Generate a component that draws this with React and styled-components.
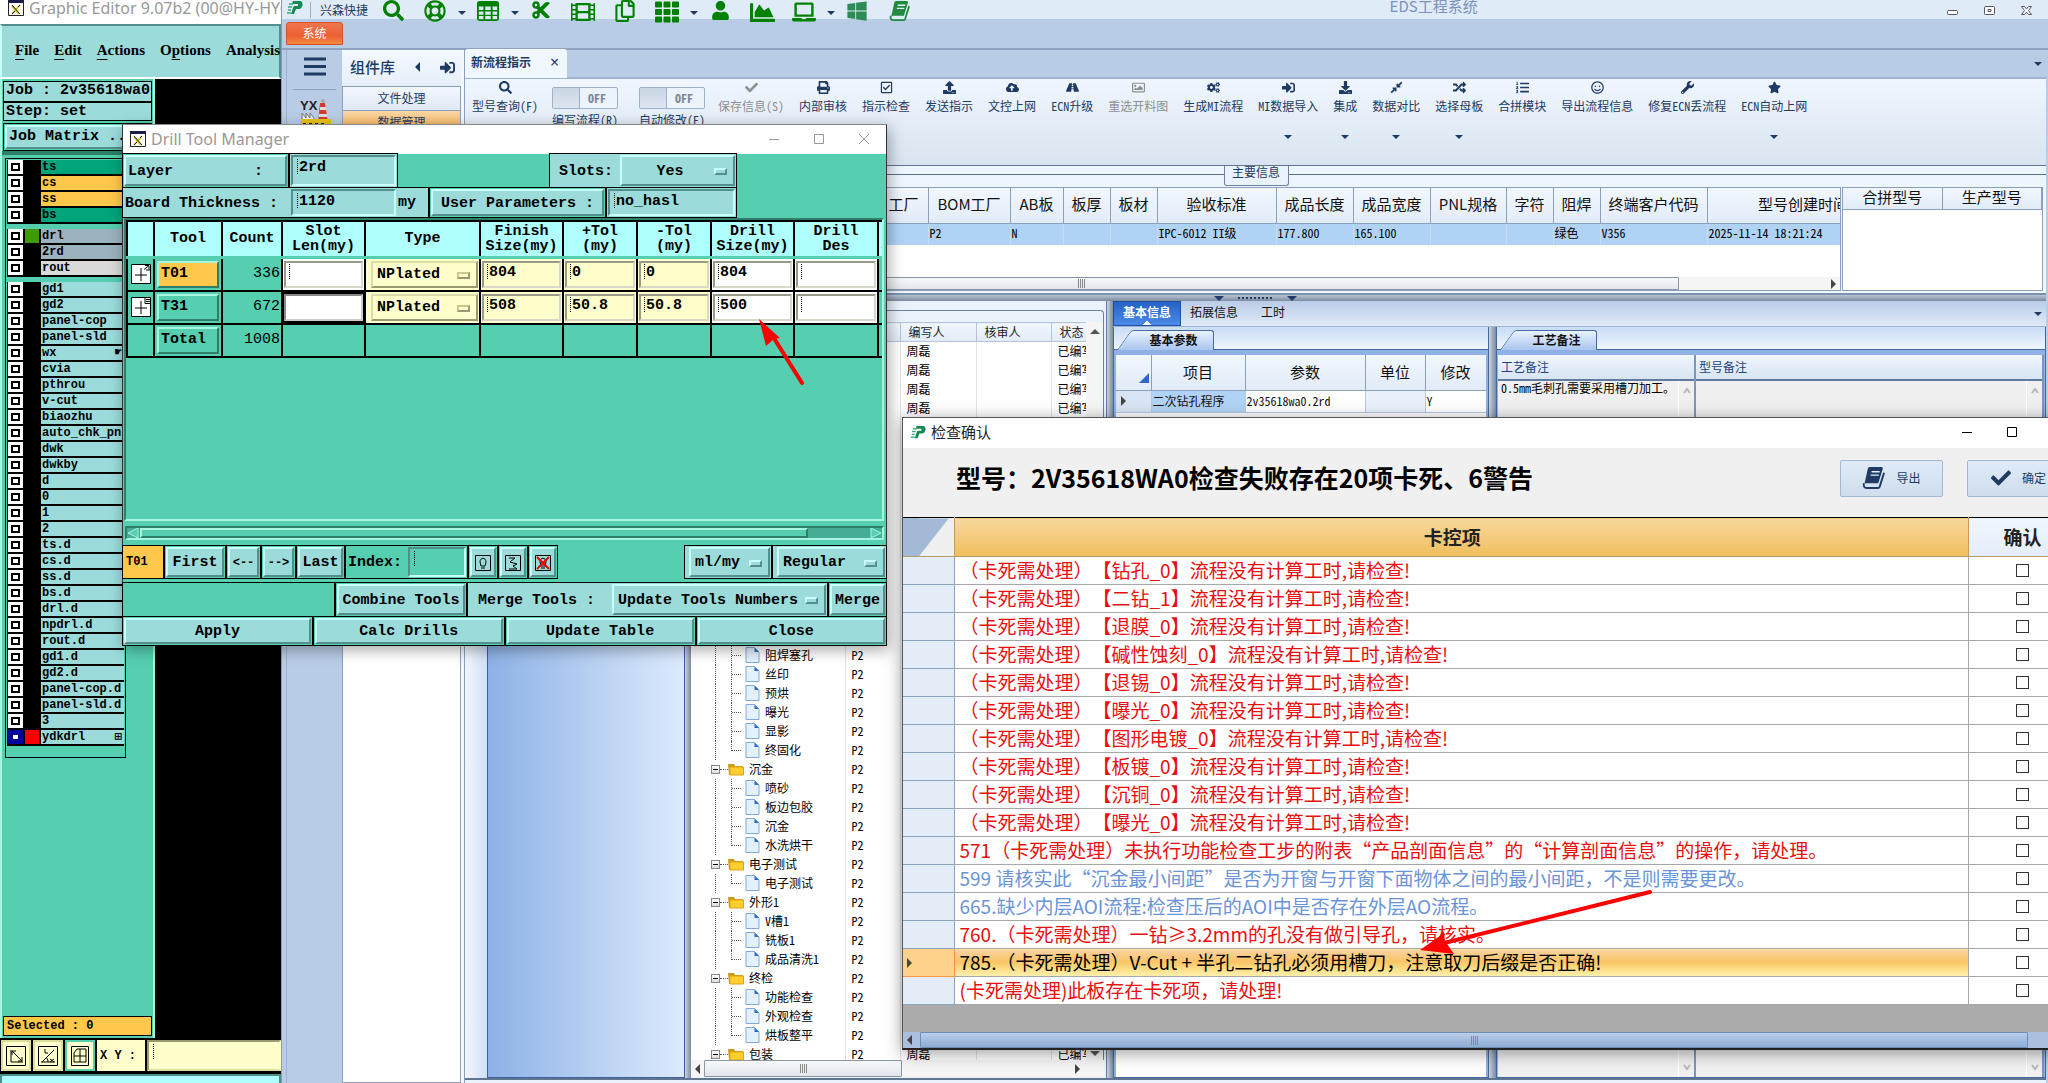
import React from "react";
import styled, { createGlobalStyle, css } from "styled-components";
import {
  FaSearch, FaRegLifeRing, FaCut, FaFilm, FaRegCopy, FaTh, FaUser,
  FaChartArea, FaLaptop, FaWindows, FaCheck, FaPrint, FaRegCheckSquare,
  FaUpload, FaCloudUploadAlt, FaRoad, FaRegImage, FaCogs, FaSignInAlt, FaDownload,
  FaCompressAlt, FaRandom, FaListOl, FaRegSmile, FaWrench, FaStar,
} from "react-icons/fa";

const MONO = '"Liberation Mono", monospace';
const SONG = '"Noto Sans Mono CJK SC", "Noto Sans CJK SC", sans-serif';
const HEI = '"Noto Sans CJK SC", sans-serif';
const UI = '"Noto Sans", "Noto Sans CJK SC", sans-serif';

const c = {
  teal: "#55cfb0", tealDark: "#2d7f6a", tealLight: "#a5f5df",
  cyan: "#9bdcdb", cyanDark: "#558f8d", cyanLight: "#c8fffb",
  head: "#b0ffff", yellow: "#ffffcc", yellowDark: "#9a9a72", amber: "#ffc84b",
  navy: "#1f3a63", edge: "#8ba0bd", sky: "#b0d3f5", band: "#b9cce5",
};

const Global = createGlobalStyle`
  *, *::before, *::after { box-sizing: border-box; }
  body { margin: 0; overflow: hidden; text-spacing-trim: space-all; }
  button, input, select, textarea { font: inherit; color: inherit; margin: 0; padding: 0; border: 0; border-radius: 0; background: none; white-space: nowrap; }
  svg { flex: none; }
  table { border-collapse: collapse; table-layout: fixed; }
  th, td { padding: 0; font-weight: inherit; }
`;

const raised = (hi, lo, w = 2) => css`
  border: ${w}px solid; border-color: ${hi} ${lo} ${lo} ${hi};
`;

const Desktop = styled.main`
  position: relative; height: 100vh; min-height: 700px; overflow: hidden; background: ${c.band};
`;

/* ───────────── Graphic Editor ───────────── */

const Editor = styled.section`
  position: absolute; left: 0; top: 0; bottom: 0; width: 282px; overflow: hidden;
  display: flex; flex-direction: column; background: #000; font: bold 15px/18px ${MONO}; white-space: nowrap;
  border-right: 1px solid #8a9bb5;
`;
const EditorTitle = styled.header`
  flex: none; height: 24px; display: flex; gap: 5px; padding-left: 8px; background: #fff; overflow: hidden;
  color: #999; font: 16px/16px ${UI}; white-space: nowrap;
`;
const MenuBar = styled.nav`
  flex: none; height: 55px; display: flex; align-items: center; gap: 15px; padding: 0 0 3px 13px;
  background: ${c.cyan}; border: 2px solid; border-color: ${c.cyanDark} ${c.cyanDark} #fff ${c.cyanLight};
  font: bold 15px/18px "Liberation Serif", serif; white-space: nowrap;
  u { text-underline-offset: 4px; }
`;
const EditorBody = styled.div`flex: 1; min-height: 0; display: flex;`;
const SidePane = styled.aside`
  width: 155px; display: flex; flex-direction: column; background: ${c.teal};
  border: solid; border-width: 0 2px; border-color: ${c.tealDark} ${c.tealLight};
`;
const InfoBox = styled.div`
  margin: 2px 1px 0; border: 1px solid #000; background: ${c.cyan};
  div { height: 19px; padding-left: 2px; overflow: hidden; }
  div + div { border-top: 2px solid #000; line-height: 17px; }
`;
const MatrixButton = styled.button`
  height: 28px; margin: 2px 1px 0; border: 1px solid #000; padding: 1px; text-align: left; white-space: nowrap;
  span { display: block; height: 24px; line-height: 20px; padding-left: 2px; overflow: hidden; background: ${c.cyan}; ${raised(c.cyanLight, c.cyanDark)} }
`;
const LayerWell = styled.div`
  flex: 1; padding: 3px 0 0 3px; border-top: 4px solid ${c.tealDark};
`;
const LayerBox = styled.div`
  width: 121px; padding: 1px 1px 11px; border: 1px solid #000; display: flex; flex-direction: column; gap: 5px;
`;
const LayerList = styled.ul`list-style: none; margin: 0; padding: 0 0 0 1px; background: #000;`;
const LayerRow = styled.li`
  height: 16px; display: grid; grid-template-columns: 15px 2px 14px 2px 1fr; align-items: start;
`;
const LayerTick = styled.input`
  appearance: none; grid-column: 1; width: 15px; height: 14px; background: #fff;
  border: 3px solid ${p => (p.$on ? "#00009a" : "#fff")} !important; box-shadow: inset 0 0 0 2px ${p => (p.$on ? "#00009a" : "#000")};
`;
const Swatch = styled.span`grid-column: 3; height: 14px; background: ${p => p.$color || "#000"};`;
const LayerName = styled.label`
  grid-column: 5; height: 14px; display: flex; justify-content: space-between; align-items: center; padding: 0 2px 0 1px; overflow: hidden;
  background: ${p => p.$color}; font: bold 12px/14px ${MONO}; white-space: nowrap;
`;
const Selected = styled.output`
  margin: 3px 1px 2px; height: 20px; padding-left: 3px; border: 1px solid #000; background: ${c.amber};
  font: bold 12px/18px ${MONO};
`;
const CoordBar = styled.div`
  flex: none; height: 35px; padding: 2px 0 2px 1px; display: flex; gap: 2px; background: #000;
`;
const CoordButton = styled.button`
  width: 30px; display: grid; place-items: center; background: ${c.yellow};
  border: 2px solid ${p => (p.$on ? c.teal : "#dcdca0")};
`;
const CoordLabel = styled.label`width: 48px; padding-left: 3px; background: ${c.yellow}; font: bold 12px/32px ${MONO};`;
const CoordField = styled.div`
  flex: 1; padding: 2px 4px; display: flex; background: ${c.yellow}; border: 2px solid; border-color: ${c.yellowDark} #ffc #dcdca0 ${c.yellowDark};
  input { width: 100%; }
`;
const StatusStrip = styled.footer`flex: none; height: 9px; margin-top: 1px; background: ${c.head}; border: 2px solid #4a8f88; border-bottom: 0;`;
const IBeam = styled.i`flex: none; width: 2px; height: 15px; border-left: 1px dotted #000;`;

const XIcon = () => (
  <svg width="16" height="16" viewBox="0 0 16 16" aria-hidden="true">
    <path d="M0.5 0.5h15v15h-15z" fill="#fff" stroke="#222" />
    <path d="M0 0h16v3H0z" fill="#1c1c4a" />
    <path d="M12 5l-8 9M4 6l7 8" stroke="#c9b800" strokeWidth="1.6" />
    <path d="M4 5l8 9M4 14l3-3M10 7l2-2" stroke="#222" />
  </svg>
);

const layerGroups = [
  [["ts", "#00a57b"], ["cs", c.amber], ["ss", c.amber], ["bs", "#00a57b"]],
  [["drl", "#9bb3bf", "#3f9a00"], ["2rd", "#9bb3bf"], ["rout", "#d9d9d9"]],
  "gd1 gd2 panel-cop panel-sld wx cvia pthrou v-cut biaozhu auto_chk_pnl dwk dwkby d 0 1 2 ts.d cs.d ss.d bs.d drl.d npdrl.d rout.d gd1.d gd2.d panel-cop.d panel-sld.d 3 ydkdrl"
    .split(" ").map(n => [n, c.cyan, n === "ydkdrl" ? "#f00" : undefined]),
];
const layerMarks = { wx: "☛", ydkdrl: "⊞" };

function GraphicEditor() {
  return (
    <Editor>
      <EditorTitle><XIcon /><span>Graphic Editor 9.07b2 (00@HY-HYQ</span></EditorTitle>
      <MenuBar>
        <button><u>F</u>ile</button><button><u>E</u>dit</button><button><u>A</u>ctions</button>
        <button>O<u>p</u>tions</button><button>Analysis</button>
      </MenuBar>
      <EditorBody>
        <SidePane>
          <InfoBox><div>Job : 2v35618wa0</div><div>Step: set</div></InfoBox>
          <MatrixButton><span>Job Matrix ...</span></MatrixButton>
          <LayerWell>
            <LayerBox>
              {layerGroups.map((group, g) => (
                <LayerList key={g}>
                  {group.map(([name, color, swatch]) => (
                    <LayerRow key={name}>
                      <LayerTick type="checkbox" id={"layer-" + name} $on={name === "ydkdrl"} />
                      <Swatch $color={swatch} />
                      <LayerName htmlFor={"layer-" + name} $color={color}>
                        {name}{layerMarks[name] && <span>{layerMarks[name]}</span>}
                      </LayerName>
                    </LayerRow>
                  ))}
                </LayerList>
              ))}
            </LayerBox>
          </LayerWell>
          <Selected>Selected : 0</Selected>
        </SidePane>
      </EditorBody>
      <CoordBar>
        <CoordButton aria-label="Measure line">
          <svg width="20" height="20" fill="none" stroke="#000"><path d="M.5.5h19v19H.5zM5 4v12h12M6 5l10 10M6 9V5h4M16 11v4h-4" /></svg>
        </CoordButton>
        <CoordButton aria-label="Measure angle">
          <svg width="20" height="20" fill="none" stroke="#000"><path d="M.5.5h19v19H.5zM3 16h14M4 16L16 4M7 3v4h3M10 16c0-3-1-4-2-4M12 13l4 3m0-3l-4 3" /></svg>
        </CoordButton>
        <CoordButton aria-label="Grid" $on>
          <svg width="18" height="20" fill="none" stroke="#000"><path d="M.5.5h17v19H.5zM6 3h9v13H3V7zM3 10h12M9 3v13" /></svg>
        </CoordButton>
        <CoordLabel htmlFor="coord">X Y :</CoordLabel>
        <CoordField><IBeam /><input id="coord" /></CoordField>
      </CoordBar>
      <StatusStrip />
    </Editor>
  );
}

/* ───────────── Drill Tool Manager ───────────── */

const Drill = styled.section`
  position: absolute; left: 122px; top: 124px; width: 765px; height: 522px;
  display: flex; flex-direction: column; background: ${c.teal}; border: 1px solid #333; border-top-color: #888;
  box-shadow: 2px 4px 14px rgba(0, 0, 0, 0.35); font: bold 15px/18px ${MONO}; white-space: nowrap;
`;
const DrillTitle = styled.header`
  flex: none; height: 29px; display: flex; align-items: center; padding: 0 14px 2px 7px; gap: 5px; background: #fff; color: #999;
  font: 16px/22px ${UI};
`;
const Spacer = styled.span`flex: 1;`;
const WinButtons = styled.span`
  display: flex; gap: 29px;
  button { width: 16px; height: 16px; display: grid; place-items: center; }
`;
const FormRow = styled.div`flex: none; height: ${p => p.$h}px; margin-top: ${p => p.$top || 0}px; display: flex; gap: 2px;`;
const Cell = styled.div`
  width: ${p => (p.$w ? p.$w + "px" : "auto")}; flex: ${p => (p.$grow ? 1 : "none")};
  display: flex; align-items: center; gap: 2px; padding: 1px; outline: 1px solid #000; overflow: hidden;
  background: ${p => p.$bg || c.teal};
  > label { padding: 2px 1px 0; }
`;
const Gap = styled.div`flex: none; width: ${p => p.$w}px;`;
const MButton = styled.button`
  flex: 1; align-self: stretch; background: ${c.cyan}; ${raised(c.cyanLight, c.cyanDark)}
  padding: 2px 2px 0; white-space: pre; display: grid; align-items: center;
  font-size: ${p => (p.$small ? 12 : 15)}px; justify-content: ${p => (p.$align === "left" ? "start" : "center")};
`;
const MField = styled.div`
  width: ${p => (p.$w ? p.$w + "px" : "auto")}; flex: ${p => (p.$w ? "none" : 1)}; align-self: stretch; display: flex; padding: 2px 4px;
  background: ${p => p.$bg || c.cyan};
  border: 2px solid; border-color: ${c.cyanDark} ${c.cyanLight} ${c.cyanLight} ${c.cyanDark};
  input { width: 100%; height: 18px; }
`;
const MOption = styled.div`
  flex: 1; align-self: stretch; display: flex; align-items: center; padding: 2px 6px 0 4px; background: ${p => p.$bg || c.cyan};
  border: 2px solid; border-color: ${p => (p.$bg ? "#dcdca8 #9a9a72 #9a9a72 #dcdca8" : `${c.cyanLight} ${c.cyanDark} ${c.cyanDark} ${c.cyanLight}`)};
  select { flex: 1; min-width: 0; appearance: none; text-align: ${p => (p.$center ? "center" : "left")}; text-align-last: ${p => (p.$center ? "center" : "left")}; }
`;
const Knob = styled.span`
  flex: none; width: 13px; height: 7px; background: ${p => p.$bg || c.cyan};
  border: 2px solid; border-color: ${p => (p.$bg ? "#c8c890 #9a9a72 #9a9a72 #c8c890" : `${c.cyanLight} ${c.cyanDark} ${c.cyanDark} ${c.cyanLight}`)};
`;
const TablePanel = styled.div`
  flex: 1; min-height: 0; overflow: hidden; margin: 1px 2px 0 1px;
  border: 2px solid; border-color: ${c.tealDark} ${c.tealLight} ${c.tealLight} ${c.tealDark};
`;
const ToolTable = styled.table`
  width: 776px;
  th { height: 36px; background: ${c.head}; border: 2px solid #000; line-height: 15px; white-space: pre; }
  thead { border-bottom: 3px solid ${c.teal}; }
  td { height: 33px; border: 2px solid #000; padding: 1px; overflow: hidden; }
`;
const ToolCell = styled.td`background: ${p => p.$bg || c.teal}; text-align: right; font-weight: ${p => (p.$thin ? "normal" : "bold")};`;
const ToolButton = styled.button`
  display: block; width: 62px; height: 27px; margin: 1px auto; text-align: left; padding-left: 2px; background: ${p => p.$bg || c.teal};
  ${raised(c.tealLight, c.tealDark)}
`;
const ToolField = styled.div`
  height: 27px; display: flex; padding: 1px 3px; background: ${p => p.$bg}; font-weight: bold;
  border: 2px solid; border-color: ${p => (p.$focus ? "#888 #ccc #ccc #888" : "#9a9a8a #d8d8c8 #d8d8c8 #9a9a8a")};
  outline: ${p => (p.$focus ? "2px solid #000" : "0")};
  input { width: 100%; height: 18px; }
`;
const MiniPage = styled.button`
  display: block; margin: 0 auto; width: 20px; height: 20px;
  svg { display: block; }
`;
const MScroll = styled.div`
  flex: none; height: 14px; margin: 5px 2px 0; display: flex; background: #45ad94; border: 2px solid; border-color: ${c.tealDark} ${c.tealLight} ${c.tealLight} ${c.tealDark};
  span { width: 668px; flex: none; margin: 0 auto 0 1px; background: ${c.teal}; border: 2px solid; border-color: ${c.tealLight} ${c.tealDark} ${c.tealDark} ${c.tealLight}; }
`;

const MiniPageIcon = ({ lines }) => (
  <svg width="20" height="20" fill="none" stroke="#000">
    <path d="M.5.5h19v19H.5z" fill="#fff" /><path d="M10 4v13M4 11h12" />
    <path d={lines ? "M14 .5v6h6M15 2.500h4M15 4.500h4" : "M13 5.500l5-4M14 1.500h4v4M15 6h4"} />
  </svg>
);
const WinGlyphs = ({ color }) => (
  <WinButtons>
    <button aria-label="Minimize"><svg width="12" height="12" stroke={color}><path d="M1 6.500h10" /></svg></button>
    <button aria-label="Maximize"><svg width="12" height="12" stroke={color} fill="none"><path d="M1.500 1.500h9v9h-9z" /></svg></button>
    <button aria-label="Close"><svg width="12" height="12" stroke={color}><path d="M1 1l10 10M11 1L1 11" /></svg></button>
  </WinButtons>
);

function Option({ id, label, children, bg, center }) {
  return (
    <MOption $bg={bg} $center={center}>
      <select id={id} aria-label={label}><option>{children}</option></select><Knob $bg={bg} />
    </MOption>
  );
}
const toolRows = [
  { tool: "T01", count: 336, on: true, slot: "", fin: "804", p: "0", m: "0", size: "804" },
  { tool: "T31", count: 672, focus: true, slot: "", fin: "508", p: "50.8", m: "50.8", size: "500" },
];
const toolCols = [27, 68, 60, 83, 115, 83, 74, 74, 83, 84, 25];
const toolHeads = ["", "Tool", "Count", "Slot\nLen(my)", "Type", "Finish\nSize(my)", "+Tol\n(my)", "-Tol\n(my)", "Drill\nSize(my)", "Drill\nDes", "\nSi"];

const ToolLabel = styled.span`padding-left: 2px; font-size: 12px;`;
const LampIcon = ({ kind }) => (
  <svg width="16" height="16" fill="none" stroke="#000">
    <path d="M.5.5h15v15H.5z" />
    {kind === "snake" ? <path d="M4 3h6L5 7l7 2-4 2 4 3H4" /> : <path d="M6 13h4M6 11L5 7c0-5 6-5 6 0l-1 4z" />}
    {kind === "clear" && <path d="M2 2l12 12M14 2L2 14" stroke="#e00" strokeWidth="2" />}
  </svg>
);

function DrillToolManager() {
  return (
    <Drill>
      <DrillTitle><XIcon /><span>Drill Tool Manager</span><Spacer /><WinGlyphs color="#999" /></DrillTitle>
      <FormRow $h={33}>
        <Cell $w={165}><MButton $align="left">{"Layer         :"}</MButton></Cell>
        <Cell $w={107} $bg={c.cyan}><MField><IBeam /><input aria-label="Layer" defaultValue="2rd" /></MField></Cell>
        <Gap $w={149} />
        <Cell $w={186} $bg={c.cyan}>
          <Gap $w={5} /><label htmlFor="slots">Slots:</label><Gap $w={2} /><Option id="slots" center>Yes</Option>
        </Cell>
      </FormRow>
      <FormRow $h={29} $top={1}>
        <Cell $w={305} $bg={c.cyan}>
          <label htmlFor="thick">Board Thickness :</label><Gap $w={8} />
          <MField $w={105}><IBeam /><input id="thick" defaultValue="1120" /></MField>my
        </Cell>
        <Cell $w={175}><MButton>{"User Parameters :"}</MButton></Cell>
        <Cell $w={129} $bg={c.cyan}><MField><IBeam /><input aria-label="User parameters" defaultValue="no_hasl" /></MField></Cell>
      </FormRow>
      <TablePanel>
        <ToolTable>
          <colgroup>{toolCols.map((w, i) => <col key={i} style={{ width: w }} />)}</colgroup>
          <thead><tr>{toolHeads.map((h, i) => <th key={i}>{h}</th>)}</tr></thead>
          <tbody>
            {toolRows.map(r => (
              <tr key={r.tool}>
                <ToolCell><MiniPage aria-label={r.tool + " note"}><MiniPageIcon lines={!r.on} /></MiniPage></ToolCell>
                <ToolCell><ToolButton $bg={r.on && c.amber}>{r.tool}</ToolButton></ToolCell>
                <ToolCell $thin>{r.count}</ToolCell>
                <ToolCell $bg="#fff"><ToolField $bg="#fff" $focus={r.focus}>{!r.focus && <IBeam />}<input aria-label={r.tool + " slot"} /></ToolField></ToolCell>
                <ToolCell $bg={c.yellow}><FormRow $h={27}><Gap $w={2} /><Option label={r.tool + " type"} bg={c.yellow}>NPlated</Option></FormRow></ToolCell>
                {[["fin", c.yellow], ["p", c.yellow], ["m", c.yellow], ["size", "#fff"], ["des", "#fff"]].map(([k, bg]) => (
                  <ToolCell key={k} $bg={bg}><ToolField $bg={bg}><IBeam /><input aria-label={r.tool + " " + k} defaultValue={r[k] || ""} /></ToolField></ToolCell>
                ))}
                <ToolCell />
              </tr>
            ))}
            <tr>
              <ToolCell /><ToolCell><ToolButton>Total</ToolButton></ToolCell><ToolCell $thin>1008</ToolCell>
              {toolCols.slice(3).map((_, i) => <ToolCell key={i} />)}
            </tr>
          </tbody>
        </ToolTable>
      </TablePanel>
      <MScroll>
        <svg width="12" height="10"><path d="M11 0L1 5l10 5z" fill={c.teal} stroke={c.tealLight} /></svg>
        <span />
        <svg width="12" height="10"><path d="M1 0l10 5L1 10z" fill={c.teal} stroke={c.tealLight} /></svg>
      </MScroll>
      <FormRow $h={32} $top={6}>
        <Cell $w={40} $bg={c.amber}><ToolLabel>T01</ToolLabel></Cell>
        <Cell $w={60}><MButton>First</MButton></Cell>
        <Cell $w={33}><MButton $small>{"<--"}</MButton></Cell>
        <Cell $w={33}><MButton $small>{"-->"}</MButton></Cell>
        <Cell $w={47}><MButton>Last</MButton></Cell>
        <Cell $w={121}><label htmlFor="index">Index:</label><Gap $w={1} /><MField $bg={c.teal}><IBeam /><input id="index" /></MField></Cell>
        {["bulb", "snake", "clear"].map(k => (
          <Cell key={k} $w={28}><MButton aria-label={k}><LampIcon kind={k} /></MButton></Cell>
        ))}
        <Spacer />
        <Cell $w={86} $bg={c.cyan}><Gap $w={1} /><Option label="Units" >ml/my</Option></Cell>
        <Cell $w={113} $bg={c.cyan}><Gap $w={1} /><Option label="Mode">Regular</Option></Cell>
      </FormRow>
      <FormRow $h={33} $top={5}>
        <Cell $grow />
        <Cell $w={130}><MButton>Combine Tools</MButton></Cell>
        <Cell $w={359} $bg={c.cyan}><Gap $w={6} /><label htmlFor="merge">{"Merge Tools :"}</label><Gap $w={12} /><Option id="merge">Update Tools Numbers</Option></Cell>
        <Cell $w={57}><MButton>Merge</MButton></Cell>
      </FormRow>
      <FormRow $h={28} $top={1}>
        {["Apply", "Calc Drills", "Update Table", "Close"].map(t => <Cell key={t} $grow><MButton>{t}</MButton></Cell>)}
      </FormRow>
    </Drill>
  );
}

/* ───────────── EDS ───────────── */

const Eds = styled.section`
  position: absolute; left: 282px; right: 0; top: 0; bottom: 0; display: flex; flex-direction: column;
  background: ${c.band}; font: 12px/16px ${SONG}; color: ${c.navy}; white-space: nowrap;
`;
const EdsTitle = styled.header`
  flex: none; height: 19px; padding: 0 15px 0 5px; display: grid; grid-template-columns: minmax(0, 2fr) auto minmax(0, 1fr); background: #dfebf7;
`;
const Quick = styled.div`display: flex; align-items: flex-start; height: 19px; color: #008000;`;
const QuickName = styled.span`margin: 2px 4px 0 7px; padding-left: 9px; border-left: 1px solid #9bb0cc; color: ${c.navy}; line-height: 16px;`;
const QuickButton = styled.button`
  flex: none; width: 42px; height: 20px; display: grid; place-items: center; color: ${p => p.$color || "#008000"};
`;
const Drop = styled.i`width: 0; height: 0; margin-top: ${p => p.$top || 0}px; border: 4px solid transparent; border-bottom: 0; border-top-color: ${c.navy};`;
const QuickDrop = styled.button`flex: none; width: 11px; height: 20px; display: grid; place-items: center; padding-top: 6px;`;
const EdsName = styled.h1`margin: 0 4px 0 0; font: 15px/12px ${HEI}; height: 16px; color: #7b92bd;`;
const Caption = styled.div`
  display: flex; justify-content: flex-end; gap: 25px; padding-top: 4px;
  button { width: 12px; height: 12px; }
`;
const OrangeBar = styled.div`flex: none; height: 31px; padding: 3px 4px; border-bottom: 2px solid #8fa3c0;`;
const OrangeTab = styled.button`
  width: 57px; height: 23px; border: 1px solid #d8502a; border-radius: 3px 3px 0 0; color: #fff; padding-bottom: 2px;
  background: linear-gradient(#f0764e, #ee5f33 60%, #f58a3c);
`;
const EdsBody = styled.div`flex: 1; min-height: 0; display: flex; padding: 0 2px 0 4px;`;
const Rail = styled.nav`
  width: 56px; display: flex; flex-direction: column; align-items: center; border-left: 1px solid #9db2d0; padding-top: 7px;
  hr { width: 43px; margin: 10px 0 9px; border: 0; border-top: 1px solid #8fa3c0; }
  button { width: 30px; }
`;
const Library = styled.section`width: 123px; border-right: 1px solid ${c.edge}; background: #f4f8fd; padding-right: 3px; display: flex; flex-direction: column;`;
const LibraryHead = styled.header`
  height: 36px; display: flex; align-items: center; justify-content: space-between; padding: 0 6px 2px 8px; font: 500 15px/20px ${HEI};
  background: linear-gradient(#f3f8fe, #e6eff9);
`;
const LibraryBody = styled.div`flex: 1; border: 1px solid ${c.edge}; background: #fff; display: flex; flex-direction: column;`;
const LibraryGroup = styled.button`
  height: 24px; border-bottom: 1px solid ${c.edge}; padding-bottom: 2px; background: ${p => (p.$on ? "linear-gradient(#fbd9a8, #f2a63c)" : "linear-gradient(#f2f7fd, #dfe9f5)")};
`;
const Work = styled.section`flex: 1; min-width: 0; display: flex; flex-direction: column; background: #eaf2fb;`;
const WorkTabs = styled.div`
  flex: none; height: 29px; display: flex; justify-content: space-between; align-items: center; padding-right: 4px; background: ${c.band}; border-bottom: 2px solid #9fb4d2;
`;
const WorkTab = styled.div`
  display: flex; align-items: center; gap: 19px; height: 29px; padding: 0 8px 4px 6px; border-radius: 3px 3px 0 0;
  background: #f1f7fe; font-weight: bold;
  button:last-child { font: 16px/14px ${UI}; }
`;
const Ribbon = styled.div`
  flex: none; height: 87px; display: flex; align-items: flex-start; border-bottom: 1px solid #5f7590; background: linear-gradient(#eff6fe, #d9e4f0);
`;
const RibbonButton = styled.button`
  display: flex; flex-direction: column; align-items: center; padding: 2px 8px 0 7px; color: ${p => (p.$off ? "#8f8f8f" : c.navy)};
  svg { margin-bottom: 4px; }
`;
const Toggle = styled.label`
  display: flex; flex-direction: column; align-items: center; gap: 3px; padding: 8px 10px 0 6px; color: ${c.navy};
  & + & { padding: 8px 6px 0 11px; }
  > span { width: 66px; height: 22px; display: flex; border: 1px solid #9fb0c8; border-radius: 2px; background: #edf3fa; font: bold 12px/19px ${SONG}; color: #7b8899; }
  input { appearance: none; width: 27px; margin-right: 8px; border-right: 1px solid #9fb0c8; background: linear-gradient(#cbd6e4, #dde5ef); }
`;
const MainInfo = styled.section`
  flex: none; height: 129px; display: flex; flex-direction: column; align-items: center; padding: 0 3px 2px 4px;
  background: linear-gradient(#5b7088, #5b7088) 0 8px / 100% 1px no-repeat, #edf5fd; border-bottom: 2px solid #7c92ae;
`;
const InfoTitle = styled.h2`
  flex: none; margin: 0 0 1px 0; width: 65px; height: 20px; text-align: center; font: 12px/12px ${SONG}; border: 1px solid #6d829e; border-top: 0; border-radius: 0 0 3px 3px; background: #eaf2fb;
`;
const InfoGrids = styled.div`flex: 1; min-height: 0; align-self: stretch; display: flex; gap: 1px;`;
const GridBox = styled.div`
  flex: ${p => (p.$w ? "none" : 1)}; width: ${p => (p.$w ? p.$w + "px" : "auto")}; min-width: 0; display: flex; flex-direction: column; overflow: hidden;
  background: #fff; border: 1px solid ${c.edge}; color: #000;
`;
const GridWrap = styled.div`flex: 1; min-height: 0; overflow: hidden;`;
const DataGrid = styled.table`
  width: ${p => (p.$w ? p.$w + "px" : "100%")};
  th { height: ${p => p.$head}px; border: solid ${c.edge}; border-width: 0 1px 1px 0; padding-bottom: 2px; background: linear-gradient(#f2f7fd, #e1ebf7); font: 15px/18px ${HEI}; color: #111; }
  th:first-child { text-align: ${p => (p.$w ? "right" : "center")}; padding-right: ${p => (p.$w ? 9 : 0)}px; }
  td { height: 22px; padding: 0 0 2px 1px; border-right: 1px solid #c4dcf4; background: ${c.sky}; line-height: 18px; overflow: hidden; }
`;
const Scroll = styled.div`
  flex: none; height: ${p => p.$h}px; display: flex; align-items: center; background: #f5f5f5; width: 100%;
`;
const Thumb = styled.div`
  width: ${p => p.$w}; height: 100%; display: grid; place-items: center; border: 1px solid ${p => (p.$blue ? "#6d8db8" : "#8a96a6")}; border-radius: 1px;
  background: ${p => (p.$blue ? "linear-gradient(#b9cfea, #8fabd3)" : "linear-gradient(#f6f8fb, #e2e6ec)")};
  &::after { content: ""; width: 7px; height: 9px; background: repeating-linear-gradient(90deg, #888 0 1px, transparent 1px 2px); }
`;
const Arrow = styled.i`
  flex: none; width: 0; height: 0; margin: 0 4px; border: 5px solid transparent;
  ${p => p.$dir === "left" && css`border-left: 0; border-right-color: ${p.$color || "#444"};`}
  ${p => p.$dir === "right" && css`border-right: 0; border-left-color: #444;`}
  ${p => p.$dir === "up" && css`border-top: 0; border-bottom-color: #555;`}
  ${p => p.$dir === "down" && css`border-bottom: 0; border-top-color: ${p.$color || "#555"};`}
`;
const RowArrow = styled(Arrow)`display: block;`;
const HSplit = styled.div`
  flex: none; height: 6px; display: flex; justify-content: center; align-items: center; gap: 10px; background: linear-gradient(#b8c4d6, #7d8a9e);
  span { width: 35px; height: 2px; background: repeating-linear-gradient(90deg, #1f3a6b 0 2px, transparent 2px 4px); }
`;
const VSplit = styled.div`
  flex: none; width: ${p => p.$w}px; background: linear-gradient(90deg, #c9d4e4, #7d8a9e);
`;
const Lower = styled.div`flex: 1; min-height: 0; display: flex; background: #cfe0f6;`;
const LeftStrip = styled.div`flex: none; width: 22px; background: linear-gradient(90deg, #f3f8fe, #cfe0f6);`;
const BluePane = styled.div`flex: none; width: 198px; border: 1px solid #3d5f9a; background: linear-gradient(90deg, #8db1e6, #dcebfd);`;
const TreePane = styled.section`
  flex: none; width: 416px; display: flex; flex-direction: column; padding: 9px 2px 1px 0; background: #eaf2fb;
  border-right: 1px solid #5f7ca8;
`;
const TreeBody = styled.div`
  flex: 1; min-height: 0; display: flex; border: solid #6b829f; border-width: 1px 1px 0 0; border-top-right-radius: 4px; padding-top: 11px; background: #eaf2fb;
`;
const TreeClip = styled.div`flex: 1; min-width: 0; overflow: hidden; background: #fff;`;
const TreeTable = styled.table`
  width: 396px; color: #000;
  th { height: 19px; padding-left: 8px; text-align: left; background: linear-gradient(#f2f7fd, #e1ebf7); border: 1px solid #b5c6dc; border-left: 0; color: #222; overflow: hidden; }
  td { height: 19px; padding-left: 6px; border-right: 1px solid #e3e3e3; line-height: 18px; overflow: hidden; }
  td:first-child { padding: 0; }
`;
const TreeScroll = styled.div`width: 17px; display: flex; flex-direction: column; justify-content: space-between; align-items: center; padding: 7px 0 4px; background: #f5f5f5;`;
const Node = styled.div`height: 19px; display: flex; align-items: center; padding-left: ${p => (p.$parent ? 20 : 24)}px;`;
const Collapse = styled.button`
  width: 9px; height: 9px; border: 1px solid #888; background: linear-gradient(#fff, #ddd); display: grid; place-items: center;
  &::after { content: ""; width: 5px; height: 1px; background: #000; }
`;
const HDots = styled.i`width: 8px; border-top: 1px dotted #555;`;
const Guide = styled.i`width: 16px; height: 19px; border-left: 1px dotted #555;`;
const Branch = styled.i`
  width: 14px; height: ${p => (p.$last ? 10 : 19)}px; align-self: flex-start; border-left: 1px dotted #555; padding-top: 9px;
  &::after { content: ""; display: block; width: 9px; border-top: 1px dotted #555; }
`;
const NodeText = styled.span`margin-left: 5px;`;

const Detail = styled.section`flex: 1; min-width: 0; display: flex; flex-direction: column;`;
const DetailTabs = styled.div`
  flex: none; height: 26px; display: flex; align-items: center; padding-right: 4px; background: linear-gradient(#b9cce8, #e0eaf7); border-bottom: 1px solid #9fb4d2; color: #111;
  button { height: 25px; padding: 0 9px 4px; }
  button + button + button { padding-left: 14px; }
`;
const DetailTab = styled.button`
  ${p => p.$on && css`
    width: 68px; color: #fff; font-weight: bold; border: 1px solid #1f4f9e !important; overflow: hidden;
    background: conic-gradient(from 135deg at 50% 80%, #fff 0 90deg, transparent 90deg), linear-gradient(#2463c4, #4b8be6);
  `}
`;
const DetailBody = styled.div`flex: 1; min-height: 0; display: flex;`;
const Panel = styled.section`
  flex: ${p => (p.$w ? "none" : 1)}; width: ${p => (p.$w ? p.$w + "px" : "auto")}; min-width: 0; display: flex; flex-direction: column; background: #8fb1e6;
  border: 1px solid #45689f; border-top: 0;
`;
const PanelTabs = styled.div`flex: none; height: 23px; padding: 3px 0 0 20px; background: linear-gradient(#c7dcf6, #f0f6fe); border-bottom: 1px solid #45689f;`;
const PanelTab = styled.button`
  position: relative; z-index: 0; height: 20px; width: 80px; padding: 0 0 2px 0; font-weight: bold; color: #111;
  border: 1px solid #45689f !important; border-left: 0 !important; border-bottom: 0 !important; border-top-right-radius: 3px !important; background: linear-gradient(#eaf3fe, #a9c5ee) !important;
  &::before { content: ""; position: absolute; z-index: -1; left: -10px; top: -1px; bottom: 0; width: 24px; transform: skewX(-36deg); border: solid #45689f; border-width: 1px 0 0 1px; border-top-left-radius: 3px; background: linear-gradient(#eaf3fe, #a9c5ee); }
`;
const ParamBox = styled.div`flex: 1; min-height: 0; overflow: hidden; margin: 5px 2px 0; background: #fff;`;
const ParamTable = styled.table`
  width: 370px; color: #111;
  th { height: 35px; border: solid ${c.edge}; border-width: 0 1px 1px 0; background: linear-gradient(#f2f7fd, #e1ebf7); font: 15px/20px ${HEI}; }
  td { height: 22px; padding-left: 1px; border: solid #b5c9e2; border-width: 0 1px 1px 0; line-height: 18px; overflow: hidden; }
`;
const ParamCell = styled.td`background: ${p => p.$bg || "#fff"};`;
const Corner = styled.i`display: block; margin: 12px 2px 0 auto; width: 0; height: 0; border: 5px solid transparent; border-right-color: #2f66c8; border-bottom-color: #2f66c8;`;
const Notes = styled.div`flex: 1; min-height: 0; display: flex; margin: 5px 1px 0; background: #f0f0f0;`;
const Note = styled.div`
  flex: ${p => (p.$w ? "none" : 1)}; width: ${p => (p.$w ? p.$w + "px" : "auto")}; display: flex; flex-direction: column; border-right: 2px solid #7c97bd;
  label { height: 26px; padding-left: 3px; line-height: 24px; background: linear-gradient(#f0f6fe, #d7e4f1); border-bottom: 2px solid #5f7ca0; color: #23437f; }
`;
const NoteArea = styled.div`
  flex: 1; min-height: 0; display: flex;
  textarea { flex: 1; min-width: 0; resize: none; padding: 0 0 0 3px; line-height: 14px; color: #000; outline: 0; overflow: hidden; white-space: nowrap; }
`;
const NoteScroll = styled.div`width: 16px; border-left: 1px solid #fff; display: flex; flex-direction: column; justify-content: space-between; align-items: center; padding: 6px 0;`;
const EdsFoot = styled.footer`flex: none; height: 5px; border-top: 2px solid #5f7590; background: #eaf2fb;`;

const FolderIcon = () => (
  <svg width="16" height="14" viewBox="0 0 16 14"><path d="M0 2h6l1 2h8v9H1z" fill="#c99a1c" /><path d="M2 5h13.500v8H2z" fill="#ffcf2f" stroke="#e0a310" /></svg>
);
const DocIcon = () => (
  <svg width="15" height="16" viewBox="0 0 15 16"><path d="M1 .5h8.500L14 5v10.500H1z" fill="#e4f1ff" stroke="#7fa8dc" /><path d="M9.500.5V5H14z" fill="#2c6fc9" /></svg>
);
const LogoIcon = ({ size }) => (
  <svg width={size} height={size} viewBox="0 0 16 16"><path d="M6 1h7c4 0 3 8-1 8H9l-2 5H4l2-6 1-2h4V4H5z" fill="#178a52" /><path d="M2 4h4M1 7h4M1 10h3M0 13h4" stroke="#35b07a" strokeWidth="1.500" /></svg>
);
const TableIcon = ({ size }) => (
  <svg width={size} height={size} viewBox="0 0 24 24">
    <path fill="currentColor" fillRule="evenodd" d="M3 1h18a3 3 0 0 1 3 3v16a3 3 0 0 1-3 3H3a3 3 0 0 1-3-3V4a3 3 0 0 1 3-3zM2 7v4h5V7zM9 7v4h6V7zM17 7v4h5V7zM2 12.500v3.500h5v-3.500zM9 12.500v3.500h6v-3.500zM17 12.500v3.500h5v-3.500zM2 17.500V21h5v-3.500zM9 17.500V21h6v-3.500zM17 17.500V21h5v-3.500z" />
  </svg>
);
const BookIcon = ({ size }) => (
  <svg width={size} height={size} viewBox="0 0 24 24">
    <path fill="currentColor" d="M8 1h12c1.500 0 2 1 1.600 2.200L17 18H4.500c-1 0-1.700.3-2 1L6 3c.3-1.200 1-2 2-2z" />
    <path fill="none" stroke="currentColor" strokeWidth="2" d="M2 18c-.8 3 .5 5 3 5h11.500c1 0 1.600-.5 2-1.500L23 7" />
    <path stroke="#e6f0fa" strokeWidth="1.500" d="M10 6h8.500M9 9.500h8.500" />
  </svg>
);
const FactoryIcon = () => (
  <svg width="32" height="28" viewBox="0 0 32 28">
    <text x="0" y="11" fontFamily="Liberation Sans" fontWeight="bold" fontSize="13" fill="#222">YX</text>
    <path d="M20 4h5l3 20H18z" fill="#d23a2e" /><path d="M20 8h6v3h-6zM19 15h8v3h-8z" fill="#ddd" /><circle cx="23" cy="2" r="2" fill="#aaa" />
    <path d="M2 22V14l4 5v-5l4 5v-5l4 5v3z" fill="#eee" stroke="#777" /><path d="M1 20h30v8H1z" fill="#e7c21a" /><path d="M3 24h3v2H3zM9 24h3v2H9zM15 24h3v2h-3zM21 24h3v2h-3z" fill="#222" />
  </svg>
);
const Chevron = ({ down }) => (
  <svg width="8" height="7" fill="none" stroke="#b8b8b8" strokeWidth="2"><path d={down ? "M1 1l3 4 3-4" : "M1 6l3-4 3 4"} /></svg>
);

const quick = [
  [FaSearch, 21, 0], [FaRegLifeRing, 22, 1], [TableIcon, 22, 1], [FaCut, 20, 0], [FaFilm, 24, 0], [FaRegCopy, 22, 0],
  [FaTh, 24, 1], [FaUser, 19, 0], [FaChartArea, 25, 0], [FaLaptop, 24, 1], [FaWindows, 22, 0, "#2e8b57"], [BookIcon, 21, 0, "#1f8b3f"],
];
const ribbon = [
  ["型号查询(F)", FaSearch], ["编写流程(R)"], ["自动修改(E)"], ["保存信息(S)", FaCheck, 0, 1], ["内部审核", FaPrint], ["指示检查", FaRegCheckSquare],
  ["发送指示", FaUpload], ["文控上网", FaCloudUploadAlt], ["ECN升级", FaRoad], ["重选开料图", FaRegImage, 0, 1], ["生成MI流程", FaCogs],
  ["MI数据导入", FaSignInAlt, 1], ["集成", FaDownload, 1], ["数据对比", FaCompressAlt, 1], ["选择母板", FaRandom, 1], ["合拼模块", FaListOl],
  ["导出流程信息", FaRegSmile], ["修复ECN丢流程", FaWrench], ["ECN自动上网", FaStar, 1],
];
const infoCols = [
  ["工厂", 458, ""], ["BOM工厂", 82, "P2"], ["AB板", 53, "N"], ["板厚", 47, ""], ["板材", 47, ""], ["验收标准", 119, "IPC-6012 II级"],
  ["成品长度", 77, "177.800"], ["成品宽度", 77, "165.100"], ["PNL规格", 76, ""], ["字符", 47, ""], ["阻焊", 47, "绿色"],
  ["终端客户代码", 107, "V356"], ["型号创建时间", 192, "2025-11-14 18:21:24"],
];
const tree = [
  ["", "阻焊塞孔 丝印 预烘 曝光 显影 终固化"], ["沉金", "喷砂 板边包胶 沉金 水洗烘干"], ["电子测试", "电子测试"],
  ["外形1", "V槽1 铣板1 成品清洗1"], ["终检", "功能检查 外观检查 烘板整平"], ["包装", ""],
];
const treeRows = tree.flatMap(([p, kids]) => {
  const k = kids ? kids.split(" ") : [];
  return [...(p ? [{ name: p, parent: true }] : []), ...k.map((name, i) => ({ name, last: i === k.length - 1 }))];
});
const BLANK_ROWS = 16;
const processRows = [
  ...Array.from({ length: BLANK_ROWS }, (_, i) => ({ author: i < 4 })),
  ...treeRows.map((r, i) => ({ ...r, author: i === treeRows.length - 1 })),
];

function TreeNode({ row }) {
  if (!row.name) return null;
  if (row.parent) return <Node $parent><Collapse aria-label={"收起" + row.name} /><HDots /><FolderIcon /><NodeText>{row.name}</NodeText></Node>;
  return <Node><Guide /><Branch $last={row.last} /><DocIcon /><NodeText>{row.name}</NodeText></Node>;
}

function EdsWindow() {
  return (
    <Eds>
      <EdsTitle>
        <Quick>
          <LogoIcon size={16} />
          <QuickName>兴森快捷</QuickName>
          {quick.map(([Icon, size, drop, color], i) => (
            <React.Fragment key={i}>
              <QuickButton aria-label={"快捷" + (i + 1)} $color={color}><Icon size={size} /></QuickButton>
              {!!drop && <QuickDrop aria-label="更多"><Drop /></QuickDrop>}
            </React.Fragment>
          ))}
        </Quick>
        <EdsName>EDS工程系统</EdsName>
        <Caption>
          <button aria-label="最小化"><svg width="12" height="12" fill="#fff" stroke="#556"><rect x=".5" y="5.500" width="10" height="4" rx="1" /></svg></button>
          <button aria-label="最大化"><svg width="12" height="12" fill="#fff" stroke="#556"><rect x=".5" y="1.500" width="10" height="8" rx="1" /><path d="M4 4.500h3v2H4z" /></svg></button>
          <button aria-label="关闭"><svg width="12" height="12" fill="#fff" stroke="#556"><path d="M.5 1.500h3l2 2.500 2-2.500h3L7.500 5.500l3 4h-3l-2-2.500-2 2.500h-3l3-4z" /></svg></button>
        </Caption>
      </EdsTitle>
      <OrangeBar><OrangeTab>系统</OrangeTab></OrangeBar>
      <EdsBody>
        <Rail>
          <button aria-label="菜单"><svg width="22" height="19" stroke={c.navy} strokeWidth="3"><path d="M0 2h22M0 9.500h22M0 17h22" /></svg></button>
          <hr />
          <button aria-label="工厂"><FactoryIcon /></button>
        </Rail>
        <Library>
          <LibraryHead>组件库<Arrow $dir="left" $color={c.navy} /><FaSignInAlt size={15} /></LibraryHead>
          <LibraryBody><LibraryGroup>文件处理</LibraryGroup><LibraryGroup $on>数据管理</LibraryGroup></LibraryBody>
        </Library>
        <Work>
          <WorkTabs>
            <WorkTab><button>新流程指示</button><button aria-label="关闭标签">×</button></WorkTab>
            <Drop />
          </WorkTabs>
          <Ribbon>
            {ribbon.map(([label, Icon, drop, off]) => Icon ? (
              <RibbonButton key={label} $off={off}><Icon size={13} /><span>{label}</span>{!!drop && <Drop $top={21} />}</RibbonButton>
            ) : (
              <Toggle key={label}><span><input type="checkbox" />OFF</span>{label}</Toggle>
            ))}
          </Ribbon>
          <MainInfo>
            <InfoTitle>主要信息</InfoTitle>
            <InfoGrids>
              <GridBox>
                <GridWrap>
                  <DataGrid $w={1429} $head={35}>
                    <colgroup>{infoCols.map(([h, w]) => <col key={h} style={{ width: w }} />)}</colgroup>
                    <thead><tr>{infoCols.map(([h]) => <th key={h}>{h}</th>)}</tr></thead>
                    <tbody><tr>{infoCols.map(([h, , v]) => <td key={h}>{v}</td>)}</tr></tbody>
                  </DataGrid>
                </GridWrap>
                <Scroll $h={13}><Arrow $dir="left" /><Thumb $w="1196px" /><Spacer /><Arrow $dir="right" /></Scroll>
              </GridBox>
              <GridBox $w={201}>
                <DataGrid $head={21}><thead><tr><th>合拼型号</th><th>生产型号</th></tr></thead></DataGrid>
              </GridBox>
            </InfoGrids>
          </MainInfo>
          <HSplit><Arrow $dir="down" $color="#1f3a6b" /><span /><Arrow $dir="down" $color="#1f3a6b" /></HSplit>
          <Lower>
            <LeftStrip />
            <BluePane />
            <VSplit $w={6} />
            <TreePane>
              <TreeBody>
                <TreeClip>
                  <TreeTable>
                    <colgroup>{[154, 55, 76, 75, 36].map((w, i) => <col key={i} style={{ width: w }} />)}</colgroup>
                    <thead><tr><th></th><th></th><th>编写人</th><th>核审人</th><th>状态</th></tr></thead>
                    <tbody>
                      {processRows.map((r, i) => (
                        <tr key={i}>
                          <td><TreeNode row={r} /></td><td>{r.name ? "P2" : ""}</td>
                          <td>{r.author ? "周磊" : ""}</td><td></td><td>{r.author ? "已编写" : ""}</td>
                        </tr>
                      ))}
                    </tbody>
                  </TreeTable>
                </TreeClip>
                <TreeScroll><Arrow $dir="up" /><Arrow $dir="down" /></TreeScroll>
              </TreeBody>
              <Scroll $h={17}><Arrow $dir="left" /><Thumb $w="198px" /><Spacer /><Arrow $dir="right" /><Gap $w={20} /></Scroll>
            </TreePane>
            <VSplit $w={6} />
            <Detail>
              <DetailTabs>
                <DetailTab $on>基本信息</DetailTab><DetailTab>拓展信息</DetailTab><DetailTab>工时</DetailTab><Spacer /><Drop />
              </DetailTabs>
              <DetailBody>
                <Panel $w={376}>
                  <PanelTabs><PanelTab>基本参数</PanelTab></PanelTabs>
                  <ParamBox>
                    <ParamTable>
                      <colgroup>{[35, 94, 120, 60, 61].map((w, i) => <col key={i} style={{ width: w }} />)}</colgroup>
                      <thead><tr><th><Corner /></th><th>项目</th><th>参数</th><th>单位</th><th>修改</th></tr></thead>
                      <tbody><tr>
                        <ParamCell $bg="#d9e5f4"><RowArrow $dir="right" /></ParamCell>
                        <ParamCell $bg={c.sky}>二次钻孔程序</ParamCell><ParamCell>2v35618wa0.2rd</ParamCell><ParamCell $bg="#e9f2fc" /><ParamCell>Y</ParamCell>
                      </tr></tbody>
                    </ParamTable>
                  </ParamBox>
                </Panel>
                <VSplit $w={7} />
                <Panel>
                  <PanelTabs><PanelTab>工艺备注</PanelTab></PanelTabs>
                  <Notes>
                    <Note $w={198}>
                      <label htmlFor="craft">工艺备注</label>
                      <NoteArea><textarea id="craft" defaultValue="0.5mm毛刺孔需要采用槽刀加工。" /><NoteScroll><Chevron /><Chevron down /></NoteScroll></NoteArea>
                    </Note>
                    <Note>
                      <label htmlFor="model">型号备注</label>
                      <NoteArea><textarea id="model" /><NoteScroll><Chevron /><Chevron down /></NoteScroll></NoteArea>
                    </Note>
                  </Notes>
                </Panel>
              </DetailBody>
            </Detail>
          </Lower>
          <EdsFoot />
        </Work>
      </EdsBody>
    </Eds>
  );
}

/* ───────────── Check dialog ───────────── */

const Dialog = styled.section`
  position: absolute; left: 902px; right: -30px; top: 417px; bottom: 33px; display: flex; flex-direction: column;
  border: 1px solid #555; border-bottom: 2px solid #222; background: #ababab; box-shadow: 0 3px 16px rgba(0, 0, 0, 0.4); white-space: nowrap;
`;
const DialogTitle = styled.header`
  flex: none; height: 30px; display: flex; align-items: center; gap: 5px; padding: 0 12px 2px 8px; background: #fff; font: 15px/20px ${HEI}; color: #222;
`;
const DialogHead = styled.div`
  flex: none; height: 69px; display: flex; align-items: center; gap: 24px; padding: 0 7px 8px 53px; background: #f0f0f0;
  h2 { flex: 1; margin: 0; padding-bottom: 4px; font: bold 25px/32px ${HEI}; color: #000; }
`;
const DialogButton = styled.button`
  width: 103px; height: 37px; display: flex; align-items: center; justify-content: center; gap: 11px; border: 1px solid #a3b8d2; border-radius: 2px;
  padding-bottom: 2px; background: linear-gradient(#dfebf8, #cfddec); color: ${c.navy}; font: 12px/16px ${SONG};
`;
const CheckTable = styled.table`
  flex: none; width: 100%; border-top: 1px solid #000; background: #fff; font: 19px/22px ${HEI};
`;
const CheckHead = styled.th`
  height: 39px; border-right: 1px solid #c79a5c; border-bottom: 1px solid #b99a6b; font: bold 19px/24px ${HEI}; color: #222;
  padding-right: ${p => (p.$main ? 18 : 0)}px;
  background: ${p => (p.$main ? "linear-gradient(#f8d89e, #f0be5c)" : p.$corner ? "linear-gradient(128deg, #a3bad6 56%, #f0f0f0 57%)" : "linear-gradient(#f0f6fd, #e3edf9)")};
`;
const CheckRow = styled.tr`
  height: 28px; color: ${p => ({ red: "#e80f0f", blue: "#6b93d8", now: "#000" }[p.$tone])};
  td { height: 28px; border: solid #a7a7a7; border-width: 0 1px 1px 0; padding: 0 0 2px 5px; overflow: hidden; vertical-align: middle; }
  td:first-child { background: ${p => (p.$tone === "now" ? "#fdd28c" : "#e3ecf7")}; border-color: ${p => (p.$tone === "now" ? "#f09a3c" : "#8ba3c2")}; padding: 0; }
  td:nth-child(2) { background: ${p => (p.$tone === "now" ? "linear-gradient(#f8d3a2, #fbc465 45%, #fde08a 75%, #fff0b0)" : "#fff")}; }
  td:last-child { text-align: center; padding: 0; line-height: 0; }
`;
const CheckBox = styled.input`appearance: none; width: 13px; height: 13px; border: 1px solid #333 !important; background: #fff;`;
const DialogScroll = styled.div`
  flex: none; height: 16px; margin-top: auto; display: flex; align-items: center; background: #a9bfdd;
`;
const ThumbFill = styled(Thumb)`flex: 1;`;

const missing = "钻孔_0 二钻_1 退膜_0 碱性蚀刻_0 退锡_0 曝光_0 图形电镀_0 板镀_0 沉铜_0 曝光_0".split(" ");
const checks = [
  ...missing.map(m => [`（卡死需处理）【${m}】流程没有计算工时,请检查!`, "red"]),
  ["571（卡死需处理）未执行功能检查工步的附表“产品剖面信息”的“计算剖面信息”的操作，请处理。", "red"],
  ["599 请核实此“沉金最小间距”是否为开窗与开窗下面物体之间的最小间距，不是则需要更改。", "blue"],
  ["665.缺少内层AOI流程:检查压后的AOI中是否存在外层AO流程。", "blue"],
  ["760.（卡死需处理）一钻≥3.2mm的孔没有做引导孔，请核实。", "red"],
  ["785.（卡死需处理）V-Cut + 半孔二钻孔必须用槽刀，注意取刀后缀是否正确!", "now"],
  ["(卡死需处理)此板存在卡死项，请处理!", "red"],
];

function CheckDialog() {
  return (
    <Dialog role="dialog" aria-label="检查确认">
      <DialogTitle><LogoIcon size={15} />检查确认<Spacer /><WinGlyphs color="#000" /></DialogTitle>
      <DialogHead>
        <h2>型号：2V35618WA0检查失败存在20项卡死、6警告</h2>
        <DialogButton><BookIcon size={23} />导出</DialogButton>
        <DialogButton><FaCheck size={20} />确定</DialogButton>
      </DialogHead>
      <CheckTable>
        <colgroup><col style={{ width: 51 }} /><col /><col style={{ width: 108 }} /></colgroup>
        <thead><tr><CheckHead $corner aria-label="全选" /><CheckHead $main>卡控项</CheckHead><CheckHead>确认</CheckHead></tr></thead>
        <tbody>
          {checks.map(([text, tone], i) => (
            <CheckRow key={i} $tone={tone}>
              <td>{tone === "now" && <RowArrow $dir="right" />}</td>
              <td>{text}</td>
              <td><CheckBox type="checkbox" aria-label={"确认 " + (i + 1)} /></td>
            </CheckRow>
          ))}
        </tbody>
      </CheckTable>
      <DialogScroll><Arrow $dir="left" /><Gap $w={4} /><ThumbFill $blue /><Gap $w={36} /><Arrow $dir="right" /></DialogScroll>
    </Dialog>
  );
}

/* ───────────── Red markers ───────────── */

const Marker = styled.svg`
  position: absolute; left: ${p => p.$x}px; top: ${p => p.$y}px; pointer-events: none;
  path { fill: #f00; stroke: none; }
  line { stroke: #f00; stroke-width: 4; stroke-linecap: round; }
`;

export default function App() {
  return (
    <Desktop>
      <Global />
      <EdsWindow />
      <GraphicEditor />
      <DrillToolManager />
      <CheckDialog />
      <Marker $x={755} $y={315} width="55" height="75" aria-hidden="true">
        <line x1="47" y1="68" x2="17" y2="20" /><path d="M4 4l21 19-6 1-8 7z" />
      </Marker>
      <Marker $x={1415} $y={885} width="245" height="75" aria-hidden="true">
        <line x1="235" y1="7" x2="25" y2="59" /><path d="M5 65l24-17 1 8 9 13z" />
      </Marker>
    </Desktop>
  );
}
